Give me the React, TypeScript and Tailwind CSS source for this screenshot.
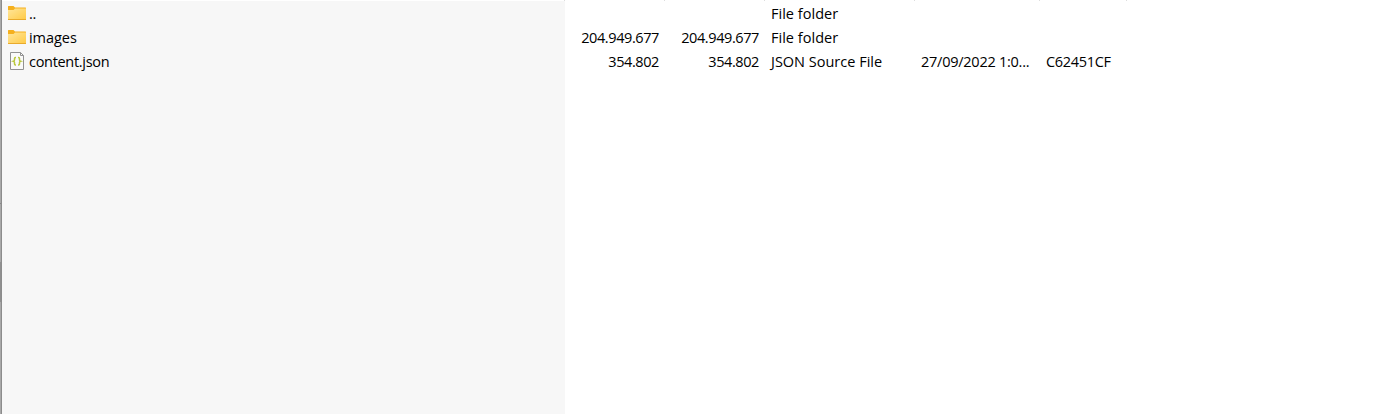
import type { ReactNode } from "react";

function FolderIcon() {
  return (
    <svg width="20" height="18" viewBox="0 1 20 18" className="shrink-0">
      <defs>
        <linearGradient id="folder" x1="0" y1="0" x2="1" y2="1">
          <stop offset="0" stopColor="#ffe69a" />
          <stop offset="1" stopColor="#ffca45" />
        </linearGradient>
      </defs>
      <path d="M1 3.5V2.5Q1 2 1.5 2H6.5L8 3.5H18.5Q19 3.5 19 4V8H1Z" fill="#f5b01e" />
      <path d="M1 6H6.5L8 4.5H19V15.5Q19 16 18.5 16H1.5Q1 16 1 15.5Z" fill="url(#folder)" />
      <path d="M1 15H19V15.5Q19 16 18.5 16H1.5Q1 16 1 15.5Z" fill="#e9aa2c" />
    </svg>
  );
}

function JsonIcon() {
  return (
    <svg width="20" height="20" viewBox="0 1 20 20" className="shrink-0">
      <path d="M3.5 1.5H13.5L16.5 4.5V18.5H3.5Z" fill="#fafafa" stroke="#929292" />
      <path d="M13.5 1.5V4.5H16.5" fill="none" stroke="#929292" />
      <path d="M9 6.5H8.5Q7.5 6.5 7.5 7.5V9Q7.5 10 6.5 10.3Q7.5 10.6 7.5 11.5V13Q7.5 14 8.5 14H9M11 6.5H11.5Q12.5 6.5 12.5 7.5V9Q12.5 10 13.5 10.3Q12.5 10.6 12.5 11.5V13Q12.5 14 11.5 14H11" fill="none" stroke="#b9c83c" strokeWidth="1.5" />
    </svg>
  );
}

function Row({ children }: { children?: ReactNode }) {
  return <div className="flex h-6 items-center">{children}</div>;
}

function Column({ className, children }: { className: string; children?: ReactNode }) {
  return (
    <div className={`flex shrink-0 flex-col ${className}`}>
      <div className="flex h-px justify-end bg-white">
        <div className="h-px w-px bg-[#dedede]" />
      </div>
      <div className="pt-px">{children}</div>
    </div>
  );
}

export default function App() {
  return (
    <main className="flex h-[414px] w-[1388px] overflow-hidden whitespace-nowrap bg-white font-['Open_Sans',sans-serif] text-[14.5px] text-black">
      <div className="flex w-px shrink-0 flex-col bg-[#a9a9a9]">
        <div className="h-[203px]" />
        <div className="h-px bg-[#888888]" />
        <div className="h-[58px]" />
        <div className="h-10 bg-[#909090]" />
      </div>
      <div className="w-px shrink-0 bg-[#8c8c8c]" />
      <Column className="w-[563px] bg-[#f7f7f7] [&>div:last-child]:pl-[5px]">
        <Row><FolderIcon /><span className="ml-0.5 tracking-[-0.4px]">..</span></Row>
        <Row><FolderIcon /><span className="ml-0.5 tracking-[-0.05px]">images</span></Row>
        <Row><JsonIcon /><span className="ml-0.5 tracking-[-0.3px]">content.json</span></Row>
      </Column>
      <Column className="w-[100px]">
        <Row />
        <Row><span className="ml-auto mr-1.5 tracking-[-0.4px]">204.949.677</span></Row>
        <Row><span className="ml-auto mr-1.5 tracking-[-0.4px]">354.802</span></Row>
      </Column>
      <Column className="w-[100px]">
        <Row />
        <Row><span className="ml-auto mr-1.5 tracking-[-0.4px]">204.949.677</span></Row>
        <Row><span className="ml-auto mr-1.5 tracking-[-0.4px]">354.802</span></Row>
      </Column>
      <Column className="w-[150px]">
        <Row><span className="ml-1.5 tracking-[0.02px]">File folder</span></Row>
        <Row><span className="ml-1.5 tracking-[0.02px]">File folder</span></Row>
        <Row><span className="ml-1.5">JSON Source File</span></Row>
      </Column>
      <Column className="w-[125px]">
        <Row /><Row />
        <Row><span className="ml-1.5 tracking-[-0.25px]">27/09/2022 1:0...</span></Row>
      </Column>
      <Column className="w-[87px]">
        <Row /><Row />
        <Row><span className="ml-1.5 tracking-[-0.3px]">C62451CF</span></Row>
      </Column>
    </main>
  );
}
